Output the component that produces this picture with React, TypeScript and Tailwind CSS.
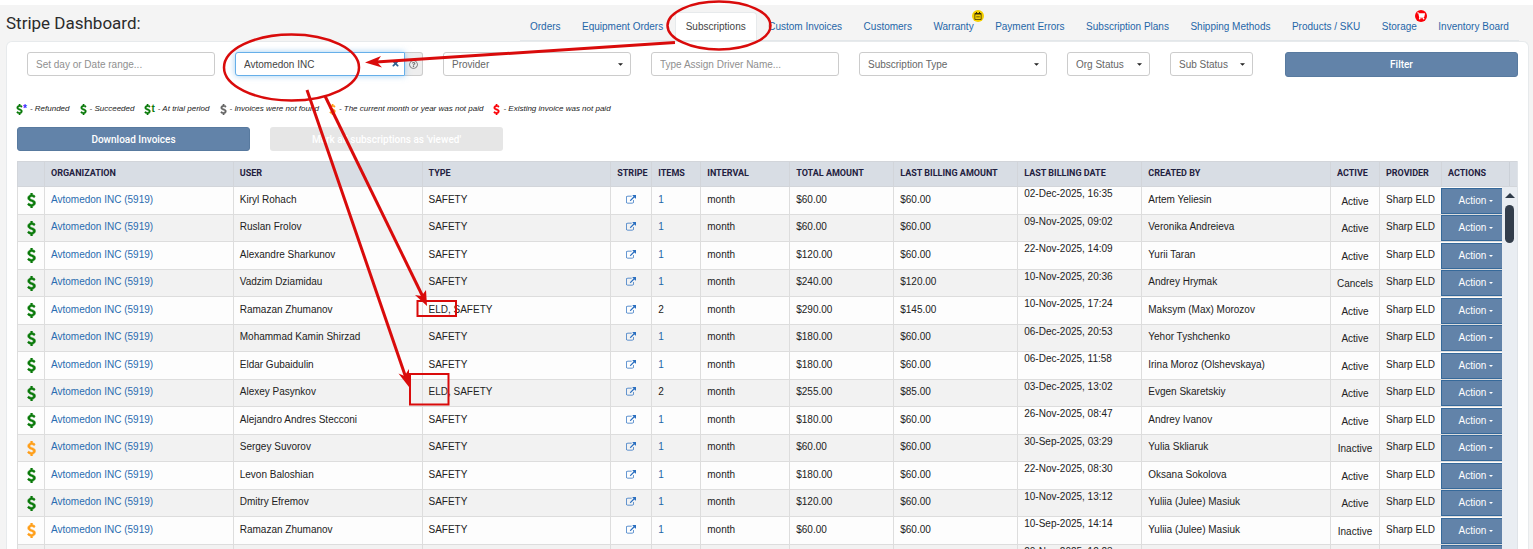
import React from "react";
import { FaTimes, FaRegQuestionCircle, FaRegCalendarMinus, FaShoppingCart } from "react-icons/fa";

const GREEN = "text-[#0a7a0a]";
const ORANGE = "text-[#ff9f1a]";

type Row = {
  user: string;
  type: string;
  items: number;
  total: string;
  last: string;
  date: string;
  by: string;
  status: string;
  unpaid?: boolean;
};

const rows: Row[] = [
  { user: "Kiryl Rohach", type: "SAFETY", items: 1, total: "$60.00", last: "$60.00", date: "02-Dec-2025, 16:35", by: "Artem Yeliesin", status: "Active" },
  { user: "Ruslan Frolov", type: "SAFETY", items: 1, total: "$60.00", last: "$60.00", date: "09-Nov-2025, 09:02", by: "Veronika Andreieva", status: "Active" },
  { user: "Alexandre Sharkunov", type: "SAFETY", items: 1, total: "$120.00", last: "$60.00", date: "22-Nov-2025, 14:09", by: "Yurii Taran", status: "Active" },
  { user: "Vadzim Dziamidau", type: "SAFETY", items: 1, total: "$240.00", last: "$120.00", date: "10-Nov-2025, 20:36", by: "Andrey Hrymak", status: "Cancels" },
  { user: "Ramazan Zhumanov", type: "ELD, SAFETY", items: 2, total: "$290.00", last: "$145.00", date: "10-Nov-2025, 17:24", by: "Maksym (Max) Morozov", status: "Active" },
  { user: "Mohammad Kamin Shirzad", type: "SAFETY", items: 1, total: "$180.00", last: "$60.00", date: "06-Dec-2025, 20:53", by: "Yehor Tyshchenko", status: "Active" },
  { user: "Eldar Gubaidulin", type: "SAFETY", items: 1, total: "$180.00", last: "$60.00", date: "06-Dec-2025, 11:58", by: "Irina Moroz (Olshevskaya)", status: "Active" },
  { user: "Alexey Pasynkov", type: "ELD, SAFETY", items: 2, total: "$255.00", last: "$85.00", date: "03-Dec-2025, 13:02", by: "Evgen Skaretskiy", status: "Active" },
  { user: "Alejandro Andres Stecconi", type: "SAFETY", items: 1, total: "$180.00", last: "$60.00", date: "26-Nov-2025, 08:47", by: "Andrey Ivanov", status: "Active" },
  { user: "Sergey Suvorov", type: "SAFETY", items: 1, total: "$60.00", last: "$60.00", date: "30-Sep-2025, 03:29", by: "Yulia Skliaruk", status: "Inactive", unpaid: true },
  { user: "Levon Baloshian", type: "SAFETY", items: 1, total: "$180.00", last: "$60.00", date: "22-Nov-2025, 08:30", by: "Oksana Sokolova", status: "Active" },
  { user: "Dmitry Efremov", type: "SAFETY", items: 1, total: "$120.00", last: "$60.00", date: "10-Nov-2025, 13:12", by: "Yuliia (Julee) Masiuk", status: "Active" },
  { user: "Ramazan Zhumanov", type: "SAFETY", items: 1, total: "$60.00", last: "$60.00", date: "10-Sep-2025, 14:14", by: "Yuliia (Julee) Masiuk", status: "Inactive", unpaid: true },
  { user: "Ramazan Zhumanov", type: "SAFETY", items: 1, total: "$60.00", last: "$60.00", date: "20-Nov-2025, 12:23", by: "Yuliia (Julee) Masiuk", status: "Active" },
];

const tabs = [
  "Orders",
  "Equipment Orders",
  "Subscriptions",
  "Custom Invoices",
  "Customers",
  "Warranty",
  "Payment Errors",
  "Subscription Plans",
  "Shipping Methods",
  "Products / SKU",
  "Storage",
  "Inventory Board",
];

function Tab({ name }: { name: string }) {
  const active = name === "Subscriptions";
  return (
    <a
      href="#"
      className={
        active
          ? "relative flex h-7 items-center rounded-t border border-b-0 border-[#e7eaec] bg-white px-2.5 text-[#444]"
          : "relative flex h-7 items-center px-2.5 text-[#1f66a8]"
      }
    >
      {name}
      {name === "Warranty" && (
        <span className="absolute -top-0.5 right-0 flex size-3 items-center justify-center rounded-full bg-[#f5d000] text-[#3a2c00]">
          <FaRegCalendarMinus className="size-2" />
        </span>
      )}
      {name === "Storage" && (
        <span className="absolute -top-0.5 right-0 flex size-3 items-center justify-center rounded-full bg-[#fb0007] text-white">
          <FaShoppingCart className="size-2" />
        </span>
      )}
    </a>
  );
}

function Caret({ className }: { className: string }) {
  return (
    <svg viewBox="0 0 6 3" className={className} aria-hidden="true">
      <path d="M0 0h6L3 3z" fill="currentColor" />
    </svg>
  );
}

function Dollar({ className }: { className: string }) {
  return (
    <svg viewBox="0 0 1024 1792" className={className} fill="currentColor" stroke="currentColor" strokeWidth="70" aria-hidden="true">
      <path d="M978 1185q0 153-99.500 263.500t-258.500 136.500v175q0 14-9 23t-23 9h-135q-13 0-22.500-9.500t-9.500-22.500v-175q-66-9-127.500-31t-101.500-44.500-74-48-46.500-37.500-17.500-18q-17-21-2-41l103-135q7-10 23-12 15-2 24 9l2 2q113 99 243 125 37 8 74 8 81 0 142.500-43t61.500-122q0-28-15-53t-33.500-42-58.500-37.500-66-32-80-32.500q-39-16-61.500-25t-61.500-26.500-62.500-31-56.500-35.500-53.500-42.500-43.500-49-35.500-58-21-66.500-8.500-78q0-138 98-242t255-134v-180q0-13 9.500-22.500t22.500-9.500h135q14 0 23 9t9 23v176q57 6 110.500 23t87 33.500 63.500 37.500 39 29 15 14q17 18 5 38l-81 146q-8 15-23 16-14 3-27-7-3-3-14.500-12t-39-26.500-58.500-32-74.500-26-85.500-11.500q-95 0-155 43t-60 111q0 26 8.500 48t29.500 41.500 39.500 33 56 31 60.500 27 70 27.500q53 20 81 31.500t76 35 75.500 42.500 62 50 53 63.500 31.500 76.500 13 94z" />
    </svg>
  );
}

function Select({ label, grow }: { label: string; grow?: boolean }) {
  return (
    <div className={grow ? "relative min-w-0 flex-1" : "relative w-[83px]"}>
      <select
        aria-label={label}
        className="h-6 w-full appearance-none rounded-[3px] border border-[#ccc] bg-white pr-4 pl-2 text-[#666] outline-none"
      >
        <option>{label}</option>
      </select>
      <Caret className="pointer-events-none absolute top-[11px] right-2 h-[3px] w-[5px] text-[#222]" />
    </div>
  );
}

function TextField({ placeholder }: { placeholder: string }) {
  return (
    <div className="min-w-0 flex-1">
      <input
        type="text"
        aria-label={placeholder}
        placeholder={placeholder}
        className="h-6 w-full rounded-[3px] border border-[#ccc] bg-white px-2 text-[#555] outline-none placeholder:text-[#8f8f8f]"
      />
    </div>
  );
}

function Legend({ color, mark, markColor, text }: { color: string; mark?: string; markColor?: string; text: string }) {
  return (
    <li className="flex items-center gap-[3px]">
      <span className={`flex items-center ${color}`}>
        <Dollar className="h-[11px] w-[7px]" />
        {mark && <b className={`text-[10px] leading-3 not-italic ${markColor}`}>{mark}</b>}
      </span>
      <span>- {text}</span>
    </li>
  );
}

function ExternalLink() {
  return (
    <svg viewBox="0 0 1792 1792" className="mx-auto size-[10px]" fill="#2a6fc0" aria-hidden="true">
      <path d="M1408 928v320q0 119-84.5 203.5t-203.5 84.5h-832q-119 0-203.5-84.5t-84.5-203.5v-832q0-119 84.5-203.5t203.5-84.5h704q14 0 23 9t9 23v64q0 14-9 23t-23 9h-704q-66 0-113 47t-47 113v832q0 66 47 113t113 47h832q66 0 113-47t47-113v-320q0-14 9-23t23-9h64q14 0 23 9t9 23zm384-864v512q0 26-19 45t-45 19-45-19l-176-176-652 652q-10 10-23 10t-23-10l-114-114q-10-10-10-23t10-23l652-652-176-176q-19-19-19-45t19-45 45-19h512q26 0 45 19t19 45z" />
    </svg>
  );
}

const heads = [
  "",
  "ORGANIZATION",
  "USER",
  "TYPE",
  "STRIPE",
  "ITEMS",
  "INTERVAL",
  "TOTAL AMOUNT",
  "LAST BILLING AMOUNT",
  "LAST BILLING DATE",
  "CREATED BY",
  "ACTIVE",
  "PROVIDER",
  "ACTIONS",
];

const cell = "border-l border-[#ddd] px-1.5 pb-0.5 whitespace-nowrap";

function SubscriptionTable() {
  return (
    <div className="mx-2.5 mt-2.5 flex min-h-0 flex-1 overflow-hidden">
      <div className="min-w-0 flex-1">
        <table className="w-full table-fixed border-separate border-spacing-0 text-left leading-3">
          <colgroup>
            <col className="w-[27px]" />
            <col />
            <col />
            <col />
            <col className="w-[41px]" />
            <col className="w-[49px]" />
            <col className="w-[89px]" />
            <col className="w-[104px]" />
            <col className="w-[124px]" />
            <col className="w-[124px]" />
            <col />
            <col className="w-[49px]" />
            <col className="w-[62px]" />
            <col className="w-[61px]" />
          </colgroup>
          <thead>
            <tr className="h-[26px] bg-[#d8dde4]">
              {heads.map((h, i) => (
                <th
                  key={i}
                  scope="col"
                  className="border-t border-b border-l border-[#d2d5da] px-1.5 pb-0.5 font-['Roboto',sans-serif] text-[9px] font-bold whitespace-nowrap text-[#1f2140]"
                >
                  {h}
                </th>
              ))}
            </tr>
          </thead>
          <tbody>
            {rows.map((r, i) => (
              <tr key={i} className="h-7 bg-[#fdfdfd] even:h-[27px] even:bg-[#f2f2f2] [&>td]:border-b [&>td]:border-b-[#ddd]">
                <td className="border-l border-[#ddd]">
                  <Dollar className={`mx-auto h-[15px] w-[9px] ${r.unpaid ? ORANGE : GREEN}`} />
                </td>
                <td className={cell}>
                  <a href="#" className="text-[#2a6cb0]">
                    Avtomedon INC (5919)
                  </a>
                </td>
                <td className={cell}>{r.user}</td>
                <td className={cell}>{r.type}</td>
                <td className={cell}>
                  <a href="#" aria-label="Open in Stripe">
                    <ExternalLink />
                  </a>
                </td>
                <td className={cell}>{r.items === 1 ? <a href="#" className="text-[#1f66a8]">1</a> : r.items}</td>
                <td className={cell}>month</td>
                <td className={cell}>{r.total}</td>
                <td className={cell}>{r.last}</td>
                <td className="border-l border-[#ddd] px-1.5 pt-px align-top whitespace-nowrap">{r.date}</td>
                <td className={cell}>{r.by}</td>
                <td className="border-l border-[#ddd] pt-0.5 text-center">{r.status}</td>
                <td className={cell}>Sharp ELD</td>
                <td className="p-0">
                  <button
                    type="button"
                    className="flex h-[26px] w-full items-center justify-center gap-[3px] border border-r-0 border-[#36699a] bg-[#6283a9] pl-2 text-white"
                  >
                    Action <Caret className="h-[2px] w-1" />
                  </button>
                </td>
              </tr>
            ))}
          </tbody>
        </table>
      </div>
      <div className="flex w-4 flex-col border-r border-[#dfe3e8] bg-[#e9edf2]">
        <div className="flex h-[26px] justify-end border-y border-[#d2d5da] bg-[#d8dde4]">
          <span className="w-2 border-l border-[#cbd0d7]" />
        </div>
        <svg viewBox="0 0 10 5" className="mx-auto mt-1.5 h-[5px] w-[10px]" aria-hidden="true">
          <path d="M0 5h10L5 0z" fill="#2f3a48" />
        </svg>
        <div className="mx-auto mt-[7px] h-[38px] w-[9px] rounded-full bg-[#333d4b]" />
      </div>
    </div>
  );
}

function Annotations() {
  return (
    <svg
      width="1533"
      height="549"
      viewBox="0 0 1533 549"
      className="pointer-events-none absolute top-0 left-0"
      fill="none"
      stroke="#d90b0b"
      strokeWidth="3"
      aria-hidden="true"
    >
      <ellipse cx="719" cy="25.5" rx="51.5" ry="24" strokeWidth="2.5" />
      <ellipse cx="291.5" cy="67.5" rx="67.5" ry="33" strokeWidth="2.5" />
      <path d="M675 42.5 376 62" />
      <path d="M307 90 406 378" />
      <path d="M325 96 423 297" />
      <g fill="#d90b0b" stroke="none">
        <path d="M365 62.5 381 56 377 62 382 67.5z" />
        <path d="M409 387 398.5 373.5 404.5 376 409 369z" />
        <path d="M427 306 415 295 421.5 296 426 290z" />
      </g>
      <rect x="417.5" y="301" width="38.5" height="15" strokeWidth="2" />
      <rect x="410" y="374" width="38.5" height="30.5" strokeWidth="2" />
    </svg>
  );
}

export default function App() {
  return (
    <div className="relative flex h-screen flex-col overflow-hidden bg-[#f4f4f4] font-['Liberation_Sans',Arial,sans-serif] text-[10px] text-[#222]">
      <div className="h-[5px] shrink-0 bg-white" />
      <header className="flex items-end justify-between pr-3.5 pl-1.5">
        <h1 className="self-center font-['Roboto',sans-serif] text-[17px] leading-5 text-[#2b2b2b]">Stripe Dashboard:</h1>
        <nav className="flex w-[999px] justify-between border-b border-[#e3e7ea] pt-[7px]">
          {tabs.map((t) => (
            <Tab key={t} name={t} />
          ))}
        </nav>
      </header>

      <main className="mr-1 ml-1.5 flex min-h-0 flex-1 flex-col rounded-t-md border border-b-0 border-[#e7eaec] bg-white">
        <form className="flex items-start gap-5 pt-2.5 pr-2.5 pl-5">
          <TextField placeholder="Set day or Date range..." />
          <div className="flex min-w-0 flex-1">
            <div className="relative min-w-0 flex-1">
              <input
                type="text"
                aria-label="Organization"
                defaultValue="Avtomedon INC"
                autoFocus
                onFocus={(e) => e.currentTarget.setSelectionRange(13, 13)}
                className="h-6 w-full rounded-l-[3px] border border-[#66afe9] bg-white px-2 text-[#444] shadow-[0_0_6px_rgba(102,175,233,0.6)] outline-none"
              />
              <FaTimes className="absolute top-[7px] right-[5px] size-[9px] text-[#2d6191]" />
            </div>
            <span className="flex h-6 w-[18px] items-center justify-center rounded-r-[3px] border border-l-0 border-[#ccc] bg-[#eee] text-[#777]">
              <FaRegQuestionCircle className="size-[9px]" />
            </span>
          </div>
          <Select label="Provider" grow />
          <TextField placeholder="Type Assign Driver Name..." />
          <Select label="Subscription Type" grow />
          <Select label="Org Status" />
          <Select label="Sub Status" />
          <button
            type="submit"
            className="ml-3 h-[25px] w-[233px] rounded-[3px] border border-[#587a9f] bg-[#6283a9] font-['Roboto',sans-serif] font-medium text-white"
          >
            Filter
          </button>
        </form>

        <ul className="mt-6 flex h-4 items-center gap-2.5 pl-[9px] text-[8px] text-[#222] italic">
          <Legend color={GREEN} mark="*" markColor="text-[#3b2cff]" text="Refunded" />
          <Legend color={GREEN} text="Succeeded" />
          <Legend color={GREEN} mark="t" markColor="text-[#0a7a0a]" text="At trial period" />
          <Legend color="text-[#666]" text="Invoices were not found" />
          <Legend color={ORANGE} text="The current month or year was not paid" />
          <Legend color="text-[#fb0007]" text="Existing invoice was not paid" />
        </ul>

        <div className="mt-2.5 flex gap-5 pl-2.5 font-['Roboto',sans-serif] font-medium text-white">
          <button type="button" className="h-6 w-[233px] rounded-[3px] border border-[#587a9f] bg-[#6283a9]">
            Download Invoices
          </button>
          <button type="button" disabled className="h-6 w-[233px] rounded-[3px] bg-[#e6e6e6]">
            Mark all subscriptions as 'viewed'
          </button>
        </div>

        <SubscriptionTable />
      </main>

      <Annotations />
    </div>
  );
}
